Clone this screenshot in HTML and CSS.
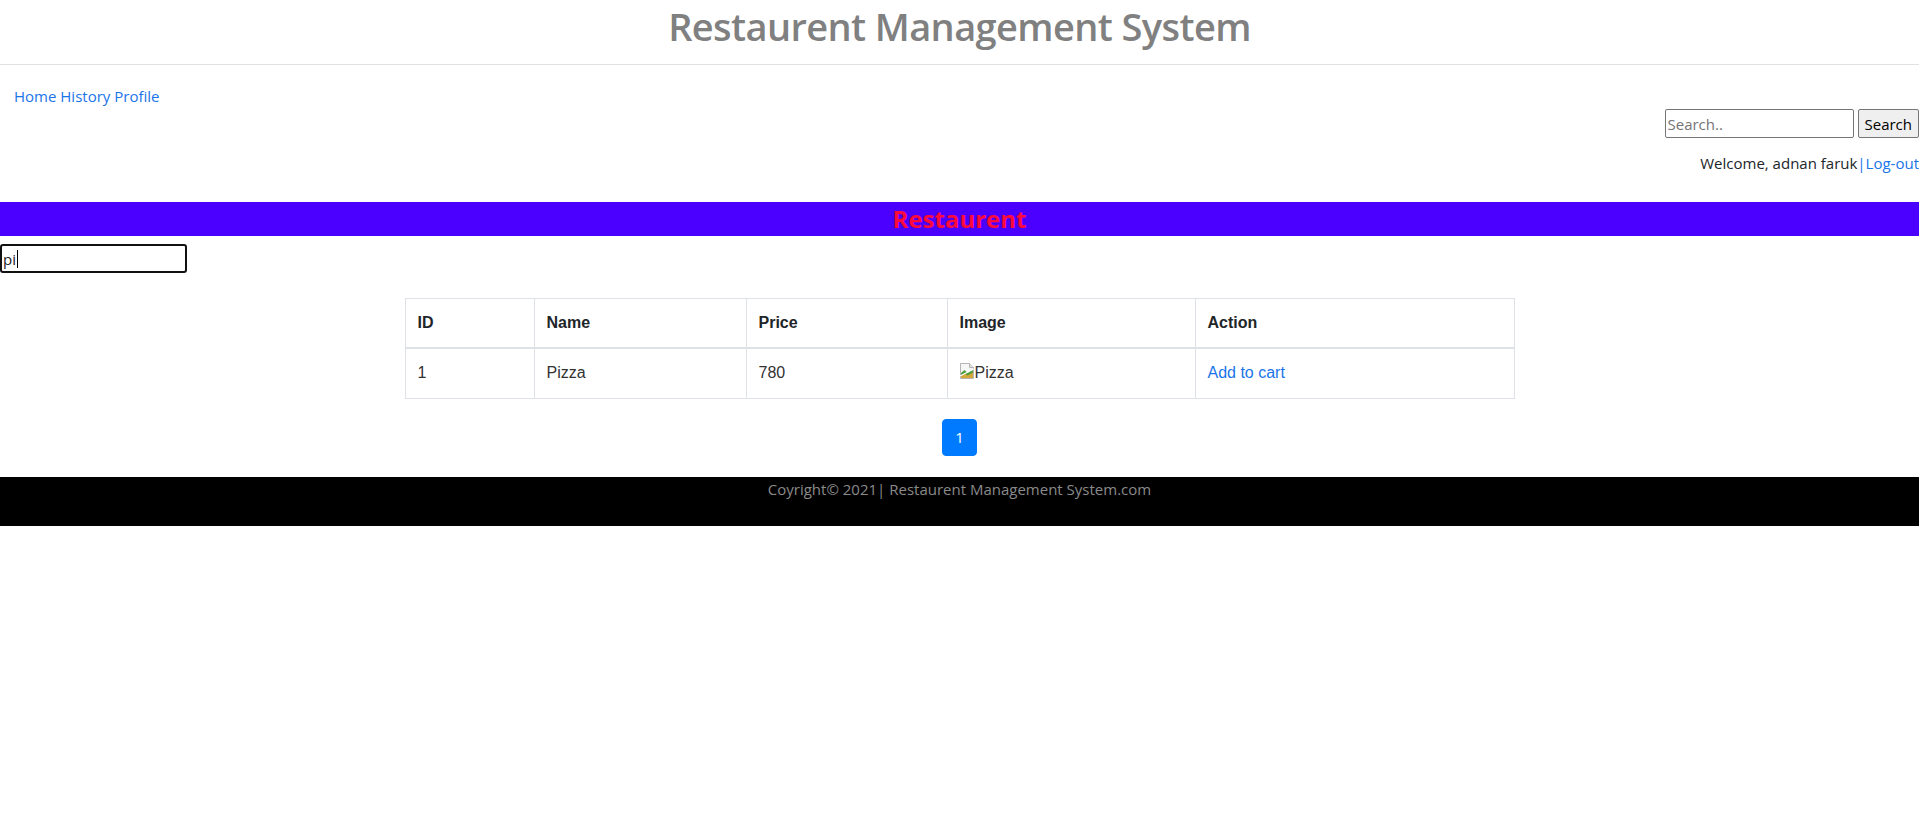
FILE: index.html
```html
<!DOCTYPE html>
<html lang="en">
<head>
<meta charset="utf-8">
<title>Restaurent Management System</title>
<link rel="stylesheet" href="styles.css">
</head>
<body>
<header class="site-header">
  <h1 class="site-title">Restaurent Management System</h1>
</header>
<nav class="top-nav">
  <a href="#">Home</a> <a href="#">History</a> <a href="#">Profile</a>
</nav>
<div class="search-row">
  <form class="search-form">
    <input class="search-input" type="text" placeholder="Search.."><button class="search-btn" type="button">Search</button>
  </form>
</div>
<div class="welcome">Welcome, adnan faruk<a href="#">|Log-out</a></div>
<h3 class="section-bar">Restaurent</h3>
<div class="filter">
  <input class="filter-input" type="text" value="pi"><span class="caret"></span>
</div>
<div class="container">
  <table class="menu-table">
    <thead>
      <tr>
        <th class="col-id">ID</th>
        <th class="col-name">Name</th>
        <th class="col-price">Price</th>
        <th class="col-image">Image</th>
        <th class="col-action">Action</th>
      </tr>
    </thead>
    <tbody>
      <tr>
        <td>1</td>
        <td>Pizza</td>
        <td>780</td>
        <td><span class="broken-img"><svg class="broken-icon" width="16" height="16" viewBox="0 0 16 16" aria-hidden="true"><path d="M1.5 0.5h9l4 4v11h-13z" fill="#f6f6f6" stroke="#b4b4b4"/><path d="M10.5 0.5v4h4" fill="#e4e4e4" stroke="#b4b4b4"/><path d="M2 15v-5l3.5-3 3 3 5.5-4v9z" fill="#4f9d3a"/><path d="M2 15v-2.5l3.5-2 3 2 5.5-3v5.5z" fill="#d3a73c"/><path d="M1 13l14-7" stroke="#fff" stroke-width="1.2"/></svg>Pizza</span></td>
        <td><a href="#">Add to cart</a></td>
      </tr>
    </tbody>
  </table>
</div>
<nav class="pager">
  <a class="page-link" href="#">1</a>
</nav>
<footer class="site-footer">Coyright© 2021| Restaurent Management System.com</footer>
</body>
</html>
```
FILE: styles.css
```css
* { box-sizing: border-box; }
body {
  margin: 0;
  font-family: "Open Sans", "Noto Sans", sans-serif;
  font-size: 15px;
  line-height: 1.5;
  color: #212529;
  background: #fff;
}
a { color: #1a75e8; text-decoration: none; }

.site-header {
  text-align: center;
  border-bottom: 1px solid #e2e2e2;
  padding-bottom: 12px;
}
.site-title {
  margin: 0;
  font-size: 38px;
  line-height: 52px;
  font-weight: 600;
  letter-spacing: -0.6px;
  color: #808080;
}

.top-nav {
  padding: 19px 14px 0;
  line-height: 24px;
}

.search-row {
  margin-top: 1px;
  text-align: right;
}
.search-form { display: inline-flex; gap: 4px; }
.search-input {
  width: 189px;
  height: 29px;
  font-family: inherit;
  font-size: 15px;
  padding: 1px 2px;
  border: 1px solid #767676;
  border-radius: 2px;
  color: #212529;
}
.search-input::placeholder { color: #757575; }
.search-btn {
  height: 29px;
  font-family: inherit;
  font-size: 15px;
  padding: 0 6px;
  border: 1px solid #767676;
  border-radius: 2px;
  background: #efefef;
  color: #000;
}

.welcome {
  margin-top: 13px;
  text-align: right;
  line-height: 24px;
}

.section-bar {
  margin: 27px 0 0;
  background: #4b00ff;
  color: #ff0a3c;
  text-align: center;
  font-size: 24px;
  line-height: 34px;
  font-weight: 700;
}

.filter {
  position: relative;
  margin-top: 8px;
  width: 187px;
}
.filter-input {
  display: block;
  width: 187px;
  height: 29px;
  font-family: inherit;
  font-size: 15px;
  padding: 0 1px;
  border: 2px solid #111;
  border-radius: 3px;
  outline: none;
  color: #222;
}
.caret {
  position: absolute;
  left: 17px;
  top: 6px;
  width: 1px;
  height: 18px;
  background: #000;
}

.container {
  width: 1110px;
  margin: 25px auto 0;
}
.menu-table {
  width: 100%;
  border-collapse: collapse;
  font-family: "Liberation Sans", Arial, sans-serif;
  font-size: 16px;
  line-height: 24px;
  color: #333;
}
.menu-table th, .menu-table td {
  border: 1px solid #dee2e6;
  padding: 12px;
  text-align: left;
  vertical-align: top;
}
.menu-table th {
  font-weight: 700;
  color: #212529;
  border-bottom-width: 2px;
}
.col-id { width: 129px; }
.col-name { width: 212px; }
.col-price { width: 201px; }
.col-image { width: 248px; }
.col-action { width: 319px; }
.broken-img { display: inline-flex; align-items: center; margin-left: -1px; }
.broken-icon { display: block; width: 16px; height: 16px; margin-top: -4px; flex: none; }

.pager {
  display: flex;
  justify-content: center;
  margin-top: 20px;
}
.page-link {
  display: block;
  padding: 8px 12px;
  line-height: 19px;
  border: 1px solid #007bff;
  border-radius: 4px;
  background: #007bff;
  color: #fff;
  font-size: 15px;
}

.site-footer {
  margin-top: 21px;
  background: #000;
  color: #8a8a8a;
  text-align: center;
  line-height: 24px;
  padding-bottom: 25px;
}
```
